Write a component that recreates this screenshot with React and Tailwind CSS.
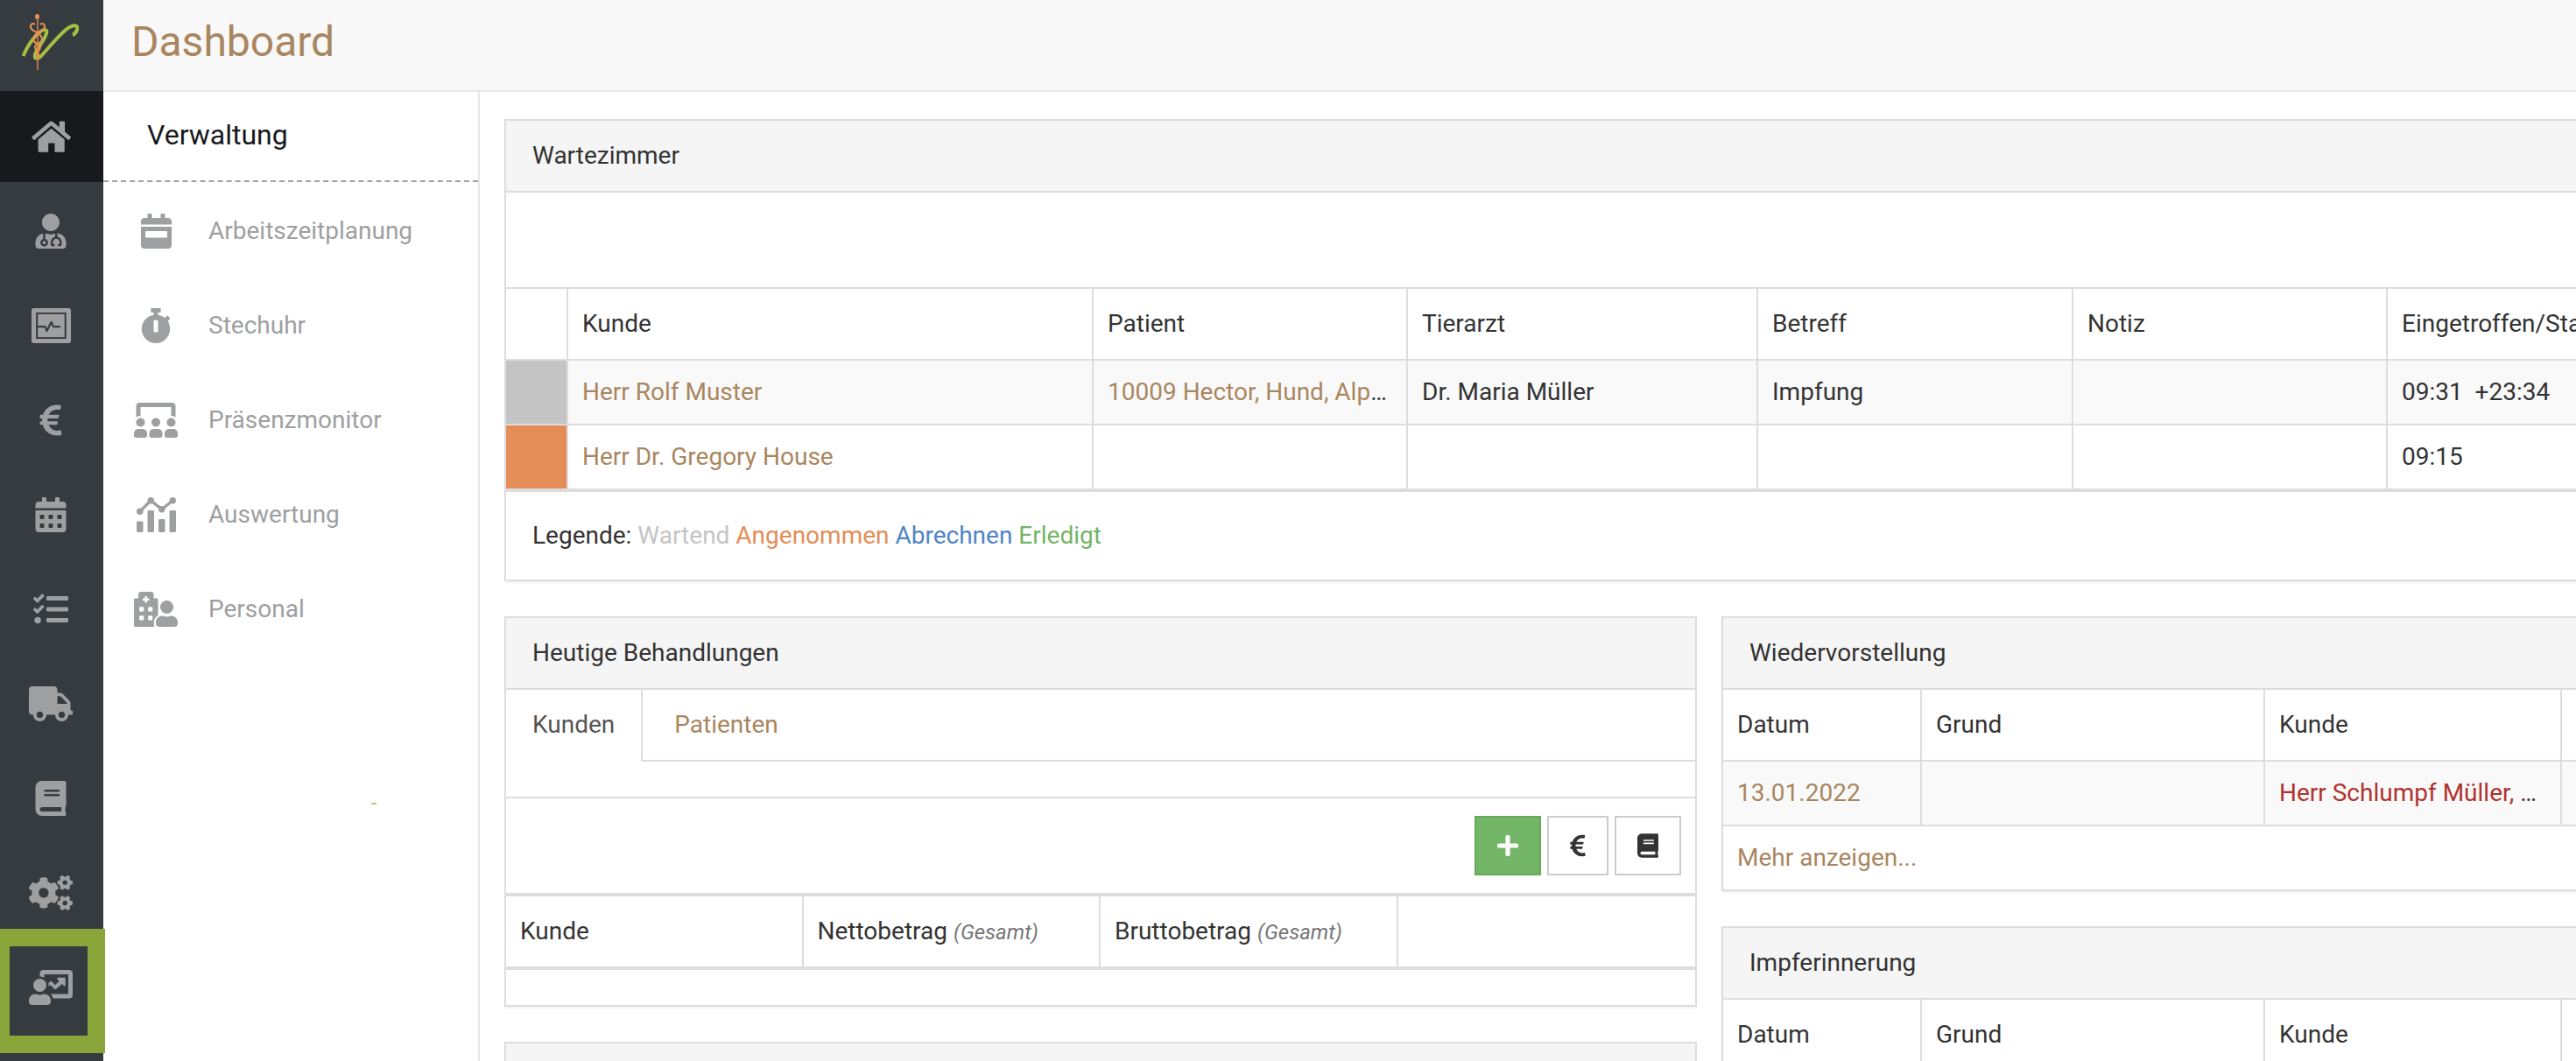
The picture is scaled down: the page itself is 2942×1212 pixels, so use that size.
import React from "react";
import {
  FaUserMd,
  FaEuroSign,
  FaCalendarAlt,
  FaTasks,
  FaTruck,
  FaBook,
  FaCogs,
  FaStopwatch,
  FaPlus,
} from "react-icons/fa";

function Logo() {
  return (
    <svg viewBox="0 0 118 104" className="h-[104px] w-[118px]" fill="none" aria-hidden="true">
      <path
        d="M26.500 64C31 53 37 44 45 37C50 33 55 33 53 38C51 46 42 56 40 62C39 68 43 68 47 64C57 53 64 44 74 35C82 28 90 27 88 34C87 37 86 39 83 40"
        stroke="#a3c043"
        strokeWidth="4"
      />
      <path d="M43 20V80" stroke="#d9894f" strokeWidth="1.5" />
      <ellipse cx="42.500" cy="19" rx="2.500" ry="3" fill="#e8914f" />
      <path
        d="M40 28C37 25 33 29 36 33C38 36 43 37 46 40C50 45 47 49 43 50C39 52 39 56 43 59C45 61 44 65 43 68M46 28C49 25 53 29 50 33C48 36 43 37 40 40C36 45 39 49 43 50C47 52 47 56 43 59C41 61 42 65 43 68"
        stroke="#e8914f"
        strokeWidth="2"
      />
    </svg>
  );
}

function HomeIcon() {
  return (
    <svg viewBox="46 47 136 120" className="h-10 w-[45px]" fill="currentColor" aria-hidden="true">
      <path d="M142 57Q142 54 145 54H158Q161 54 161 57V92L142 76Z" />
      <path d="M48 107L107 57Q114 51 121 57L181 107Q183 109 181 111L176 118Q174 120 172 118L116 71Q114 69 112 71L57 118Q55 120 53 118L48 111Q46 109 48 107Z" />
      <path d="M114 79L160 117V157Q160 161 156 161H129Q126 161 126 158V130H104V158Q104 161 101 161H73Q69 161 69 157V117Z" />
    </svg>
  );
}

function MonitorIcon() {
  return (
    <svg viewBox="0 0 576 512" className="h-10 w-[45px]" fill="currentColor" aria-hidden="true">
      <path
        fillRule="evenodd"
        d="M544 0H32C14 0 0 14 0 32V480C0 498 14 512 32 512H544C562 512 576 498 576 480V32C576 14 562 0 544 0ZM508 448H66V64H508V448Z"
      />
      <rect x="92" y="88" width="390" height="336" />
      <path
        d="M88 270H200L224 334L288 204L320 270H410"
        fill="none"
        stroke="#363b40"
        strokeWidth="28"
        strokeLinejoin="round"
        strokeLinecap="round"
      />
    </svg>
  );
}

function UserChartIcon() {
  return (
    <svg viewBox="0 0 640 512" className="h-10 w-[50px]" fill="currentColor" aria-hidden="true">
      <circle cx="160" cy="224" r="96" />
      <path d="M224 352H216C180 368 140 368 104 352H96C43 352 0 395 0 448V464C0 490 21 512 48 512H272C299 512 320 490 320 464V448C320 395 277 352 224 352Z" />
      <path d="M592 0H208C181 0 160 22 160 50V96C184 96 206 103 224 114V64H576V352H318C336 369 348 391 352 416H592C619 416 640 394 640 367V50C640 22 619 0 592 0Z" />
      <path d="M528 112H428C414 112 408 128 418 138L442 162L384 220L335 171C328 164 316 164 309 171L286 194C290 210 288 228 284 244L312 216L371 278Q384 290 397 278L486 206L510 230C520 240 534 232 534 220V122Z" />
    </svg>
  );
}

function CalendarBarIcon() {
  return (
    <svg viewBox="0 0 448 512" className="h-10 w-[35px]" fill="currentColor" aria-hidden="true">
      <path d="M0 160V112C0 86 22 64 48 64H96V16C96 7 103 0 112 0H144C153 0 160 7 160 16V64H288V16C288 7 295 0 304 0H336C345 0 352 7 352 16V64H400C426 64 448 86 448 112V160Z" />
      <path
        fillRule="evenodd"
        d="M0 192H448V464C448 490 426 512 400 512H48C22 512 0 490 0 464ZM80 256C71 256 64 263 64 272V336C64 345 71 352 80 352H368C377 352 384 345 384 336V272C384 263 377 256 368 256Z"
      />
    </svg>
  );
}

function UsersClassIcon() {
  return (
    <svg viewBox="0 0 640 512" className="h-10 w-[50px]" fill="currentColor" aria-hidden="true">
      <path d="M96 64H544V192C566 192 588 200 608 214V50C608 22 588 0 562 0H78C52 0 32 22 32 50V214C52 200 74 192 96 192Z" />
      <circle cx="96" cy="288" r="64" />
      <circle cx="320" cy="288" r="64" />
      <circle cx="544" cy="288" r="64" />
      <path d="M64 384H128C163 384 192 413 192 448V480C192 498 178 512 160 512H32C14 512 0 498 0 480V448C0 413 29 384 64 384Z" />
      <path d="M288 384H352C387 384 416 413 416 448V480C416 498 402 512 384 512H256C238 512 224 498 224 480V448C224 413 253 384 288 384Z" />
      <path d="M512 384H576C611 384 640 413 640 448V480C640 498 626 512 608 512H480C462 512 448 498 448 480V448C448 413 477 384 512 384Z" />
    </svg>
  );
}

function AnalyticsIcon() {
  return (
    <svg viewBox="0 0 576 512" className="h-10 w-[45px]" fill="currentColor" aria-hidden="true">
      <rect x="0" y="352" width="96" height="160" rx="18" />
      <rect x="160" y="192" width="96" height="320" rx="18" />
      <rect x="320" y="320" width="96" height="192" rx="18" />
      <rect x="480" y="192" width="96" height="320" rx="18" />
      <circle cx="48" cy="208" r="48" />
      <circle cx="208" cy="48" r="48" />
      <circle cx="368" cy="176" r="48" />
      <circle cx="528" cy="48" r="48" />
      <path d="M48 208L208 48L368 176L528 48" fill="none" stroke="currentColor" strokeWidth="44" />
    </svg>
  );
}

function HospitalUserIcon() {
  return (
    <svg viewBox="0 0 640 512" className="h-10 w-[50px]" fill="currentColor" aria-hidden="true">
      <path
        fillRule="evenodd"
        d="M0 116Q0 96 20 96H64V40Q64 0 104 0H248Q288 0 288 40V96H330Q352 96 352 118V345C318 365 292 400 292 448V480Q292 498 300 512H14Q0 512 0 498ZM159 64V95H128V127H159V160H193V127H224V95H193V64ZM90 222Q78 222 78 234V276Q78 288 90 288H132Q144 288 144 276V234Q144 222 132 222ZM218 222Q206 222 206 234V276Q206 288 218 288H260Q272 288 272 276V234Q272 222 260 222ZM90 350Q78 350 78 362V404Q78 416 90 416H132Q144 416 144 404V362Q144 350 132 350ZM218 350Q206 350 206 362V404Q206 416 218 416H260Q272 416 272 404V362Q272 350 260 350Z"
      />
      <circle cx="480" cy="224" r="96" />
      <path d="M544 352H536C500 368 460 368 424 352H416C363 352 320 395 320 448V464C320 490 341 512 368 512H592C619 512 640 490 640 464V448C640 395 597 352 544 352Z" />
    </svg>
  );
}

const mainNav = [
  { label: "Startseite", icon: <HomeIcon />, active: true },
  { label: "Praxis", icon: <FaUserMd size={40} /> },
  { label: "Monitor", icon: <MonitorIcon /> },
  { label: "Finanzen", icon: <FaEuroSign size={40} /> },
  { label: "Kalender", icon: <FaCalendarAlt size={40} /> },
  { label: "Aufgaben", icon: <FaTasks size={40} /> },
  { label: "Lieferungen", icon: <FaTruck className="h-10 w-[50px]" /> },
  { label: "Katalog", icon: <FaBook size={40} /> },
  { label: "Einstellungen", icon: <FaCogs className="h-10 w-[50px]" /> },
  { label: "Schulung", icon: <UserChartIcon /> },
];

const subNav = [
  { label: "Arbeitszeitplanung", icon: <CalendarBarIcon /> },
  { label: "Stechuhr", icon: <FaStopwatch size={40} /> },
  { label: "Präsenzmonitor", icon: <UsersClassIcon /> },
  { label: "Auswertung", icon: <AnalyticsIcon /> },
  { label: "Personal", icon: <HospitalUserIcon /> },
];

const line = "border-[#dddddd]";

function Panel({ title, children }) {
  return (
    <section className={`border-2 ${line} bg-white shadow-[0_2px_2px_rgba(0,0,0,0.05)]`}>
      <h3 className={`border-b-2 ${line} bg-[#f5f5f5] px-[30px] py-5`}>{title}</h3>
      {children}
    </section>
  );
}

function Th({ children, last }) {
  return (
    <th className={`truncate px-4 py-5 text-left font-normal ${last ? "" : "border-r-2"} ${line}`}>
      {children}
    </th>
  );
}

function Td({ children, last }) {
  return <td className={`truncate px-4 py-4 ${last ? "" : "border-r-2"} ${line}`}>{children}</td>;
}

function Link({ children, red }) {
  return (
    <a href="#" className={red ? "text-[#b0332f]" : "text-[#a98660]"}>
      {children}
    </a>
  );
}

const tableBase = "w-full table-fixed border-separate border-spacing-0";

function WaitingRoom() {
  return (
    <Panel title="Wartezimmer">
      <div className="h-[108px]" />
      <table className={`${tableBase} border-t-2 border-b-2 ${line}`}>
        <colgroup>
          <col className="w-[71px]" />
          <col className="w-[600px]" />
          <col className="w-[359px]" />
          <col className="w-[400px]" />
          <col className="w-[360px]" />
          <col className="w-[359px]" />
          <col />
        </colgroup>
        <thead className="[&_th]:border-b-2">
          <tr>
            <Th />
            <Th>Kunde</Th>
            <Th>Patient</Th>
            <Th>Tierarzt</Th>
            <Th>Betreff</Th>
            <Th>Notiz</Th>
            <Th last>Eingetroffen/Start</Th>
          </tr>
        </thead>
        <tbody className="[&_td]:border-b-2">
          <tr className="bg-[#f9f9f9]">
            <td className={`border-r-2 ${line} bg-[#c4c4c4] bg-clip-padding`} />
            <Td><Link>Herr Rolf Muster</Link></Td>
            <Td><Link>10009 Hector, Hund, Alpha</Link></Td>
            <Td>Dr. Maria Müller</Td>
            <Td>Impfung</Td>
            <Td />
            <Td last><span className="whitespace-pre">09:31  +23:34</span></Td>
          </tr>
          <tr>
            <td className={`border-r-2 ${line} bg-[#e48d58] bg-clip-padding`} />
            <Td><Link>Herr Dr. Gregory House</Link></Td>
            <Td />
            <Td />
            <Td />
            <Td />
            <Td last>09:15</Td>
          </tr>
        </tbody>
      </table>
      <p className="px-[30px] py-[30px]">
        Legende: <span className="text-[#c4c4c4]">Wartend</span>{" "}
        <span className="text-[#e48d58]">Angenommen</span>{" "}
        <span className="text-[#4f85c5]">Abrechnen</span>{" "}
        <span className="text-[#73b566]">Erledigt</span>
      </p>
    </Panel>
  );
}

function Treatments() {
  const btn = "flex h-[68px] items-center justify-center border-2 px-6";
  return (
    <Panel title="Heutige Behandlungen">
      <div role="tablist" className="flex">
        <button role="tab" aria-selected="true" className={`border-r-2 ${line} px-[30px] pt-5 pb-[22px] text-[#555555]`}>
          Kunden
        </button>
        <div className={`flex flex-1 border-b-2 ${line}`}>
          <button role="tab" aria-selected="false" className="px-9 py-5 text-[#a98660]">
            Patienten
          </button>
        </div>
      </div>
      <div className={`h-[42px] border-b-2 ${line}`} />
      <div className={`flex justify-end gap-[7px] border-b-2 ${line} px-4 py-5`}>
        <button aria-label="Hinzufügen" className={`${btn} border-[#65aa57] bg-[#74b667] text-white`}>
          <FaPlus className="h-7 w-6" />
        </button>
        <button aria-label="Abrechnen" className={`${btn} border-[#cccccc] bg-white`}>
          <FaEuroSign className="h-7 w-[18px]" />
        </button>
        <button aria-label="Katalog" className={`${btn} border-[#cccccc] bg-white`}>
          <FaBook className="h-7 w-6" />
        </button>
      </div>
      <table className={`${tableBase} border-t-2 border-b-2 ${line}`}>
        <thead className="[&_th]:border-b-2">
          <tr>
            <Th>Kunde</Th>
            <Th>Nettobetrag <i className="text-2xl text-[#777777]">(Gesamt)</i></Th>
            <Th>Bruttobetrag <i className="text-2xl text-[#777777]">(Gesamt)</i></Th>
            <Th last />
          </tr>
        </thead>
      </table>
      <div className="h-10" />
    </Panel>
  );
}

function Reminders({ title }) {
  return (
    <Panel title={title}>
      <table className={tableBase}>
        <colgroup>
          <col className="w-[227px]" />
          <col className="w-[392px]" />
          <col className="w-[339px]" />
          <col />
        </colgroup>
        <thead className="[&_th]:border-b-2">
          <tr>
            <Th>Datum</Th>
            <Th>Grund</Th>
            <Th>Kunde</Th>
            <Th last />
          </tr>
        </thead>
        <tbody className="[&_td]:border-b-2">
          <tr className="bg-[#f9f9f9]">
            <Td><Link>13.01.2022</Link></Td>
            <Td />
            <Td><Link red>Herr Schlumpf Müller, Peter</Link></Td>
            <Td last />
          </tr>
        </tbody>
      </table>
      <p className="px-4 py-4"><Link>Mehr anzeigen...</Link></p>
    </Panel>
  );
}

export default function App() {
  return (
    <div className="flex h-screen overflow-hidden bg-white font-['Roboto',sans-serif] text-[28px] leading-10 text-[#333333]">
      <nav aria-label="Hauptmenü" className="relative w-[118px] shrink-0 bg-[#363b40] text-[#9e9fa1]">
        <Logo />
        <ul className="flex flex-col gap-1">
          {mainNav.map((item) => (
            <li key={item.label}>
              <a
                href="#"
                aria-label={item.label}
                className={`flex h-[104px] items-center justify-center pr-0.5 ${item.active ? "bg-[#18191c]" : ""}`}
              >
                {item.icon}
              </a>
            </li>
          ))}
        </ul>
        <div className="pointer-events-none absolute top-[1061px] -right-0.5 -left-[9px] h-[142px] border-20 border-[#89a53a]" />
      </nav>

      <div className="flex min-w-0 flex-1 flex-col">
        <header className="h-[105px] shrink-0 border-b-2 border-[#e7e7e7] bg-[#f8f8f8] px-8 pt-[19px]">
          <h1 className="text-5xl leading-[58px] text-[#a98660]">Dashboard</h1>
        </header>

        <div className="flex min-h-0 flex-1">
          <aside className="relative w-[430px] shrink-0 border-r-2 border-[#e7e7e7]">
            <h2 className="border-b-2 border-dashed border-[#9e9fa1] px-[50px] pt-[29px] pb-8 text-[32px] text-[#18191c]">
              Verwaltung
            </h2>
            <ul className="flex flex-col gap-1 pt-1">
              {subNav.map((item) => (
                <li key={item.label}>
                  <a href="#" className="flex h-[104px] items-center text-[#9e9fa1]">
                    <span className="flex w-[120px] justify-center">{item.icon}</span>
                    {item.label}
                  </a>
                </li>
              ))}
            </ul>
            <div className="absolute top-[812px] left-[306px] h-0.5 w-1.5 bg-[#b5ca85]" />
          </aside>

          <main className="min-w-0 flex-1 overflow-hidden">
            <div className="flex min-w-[2780px] flex-col gap-10 pt-[31px] pl-7">
              <WaitingRoom />
              <div className="grid grid-cols-2 gap-7">
                <div className="flex flex-col gap-10">
                  <Treatments />
                  <Panel title="Heutige Termine" />
                </div>
                <div className="flex flex-col gap-10">
                  <Reminders title="Wiedervorstellung" />
                  <Reminders title="Impferinnerung" />
                </div>
              </div>
            </div>
          </main>
        </div>
      </div>
    </div>
  );
}
